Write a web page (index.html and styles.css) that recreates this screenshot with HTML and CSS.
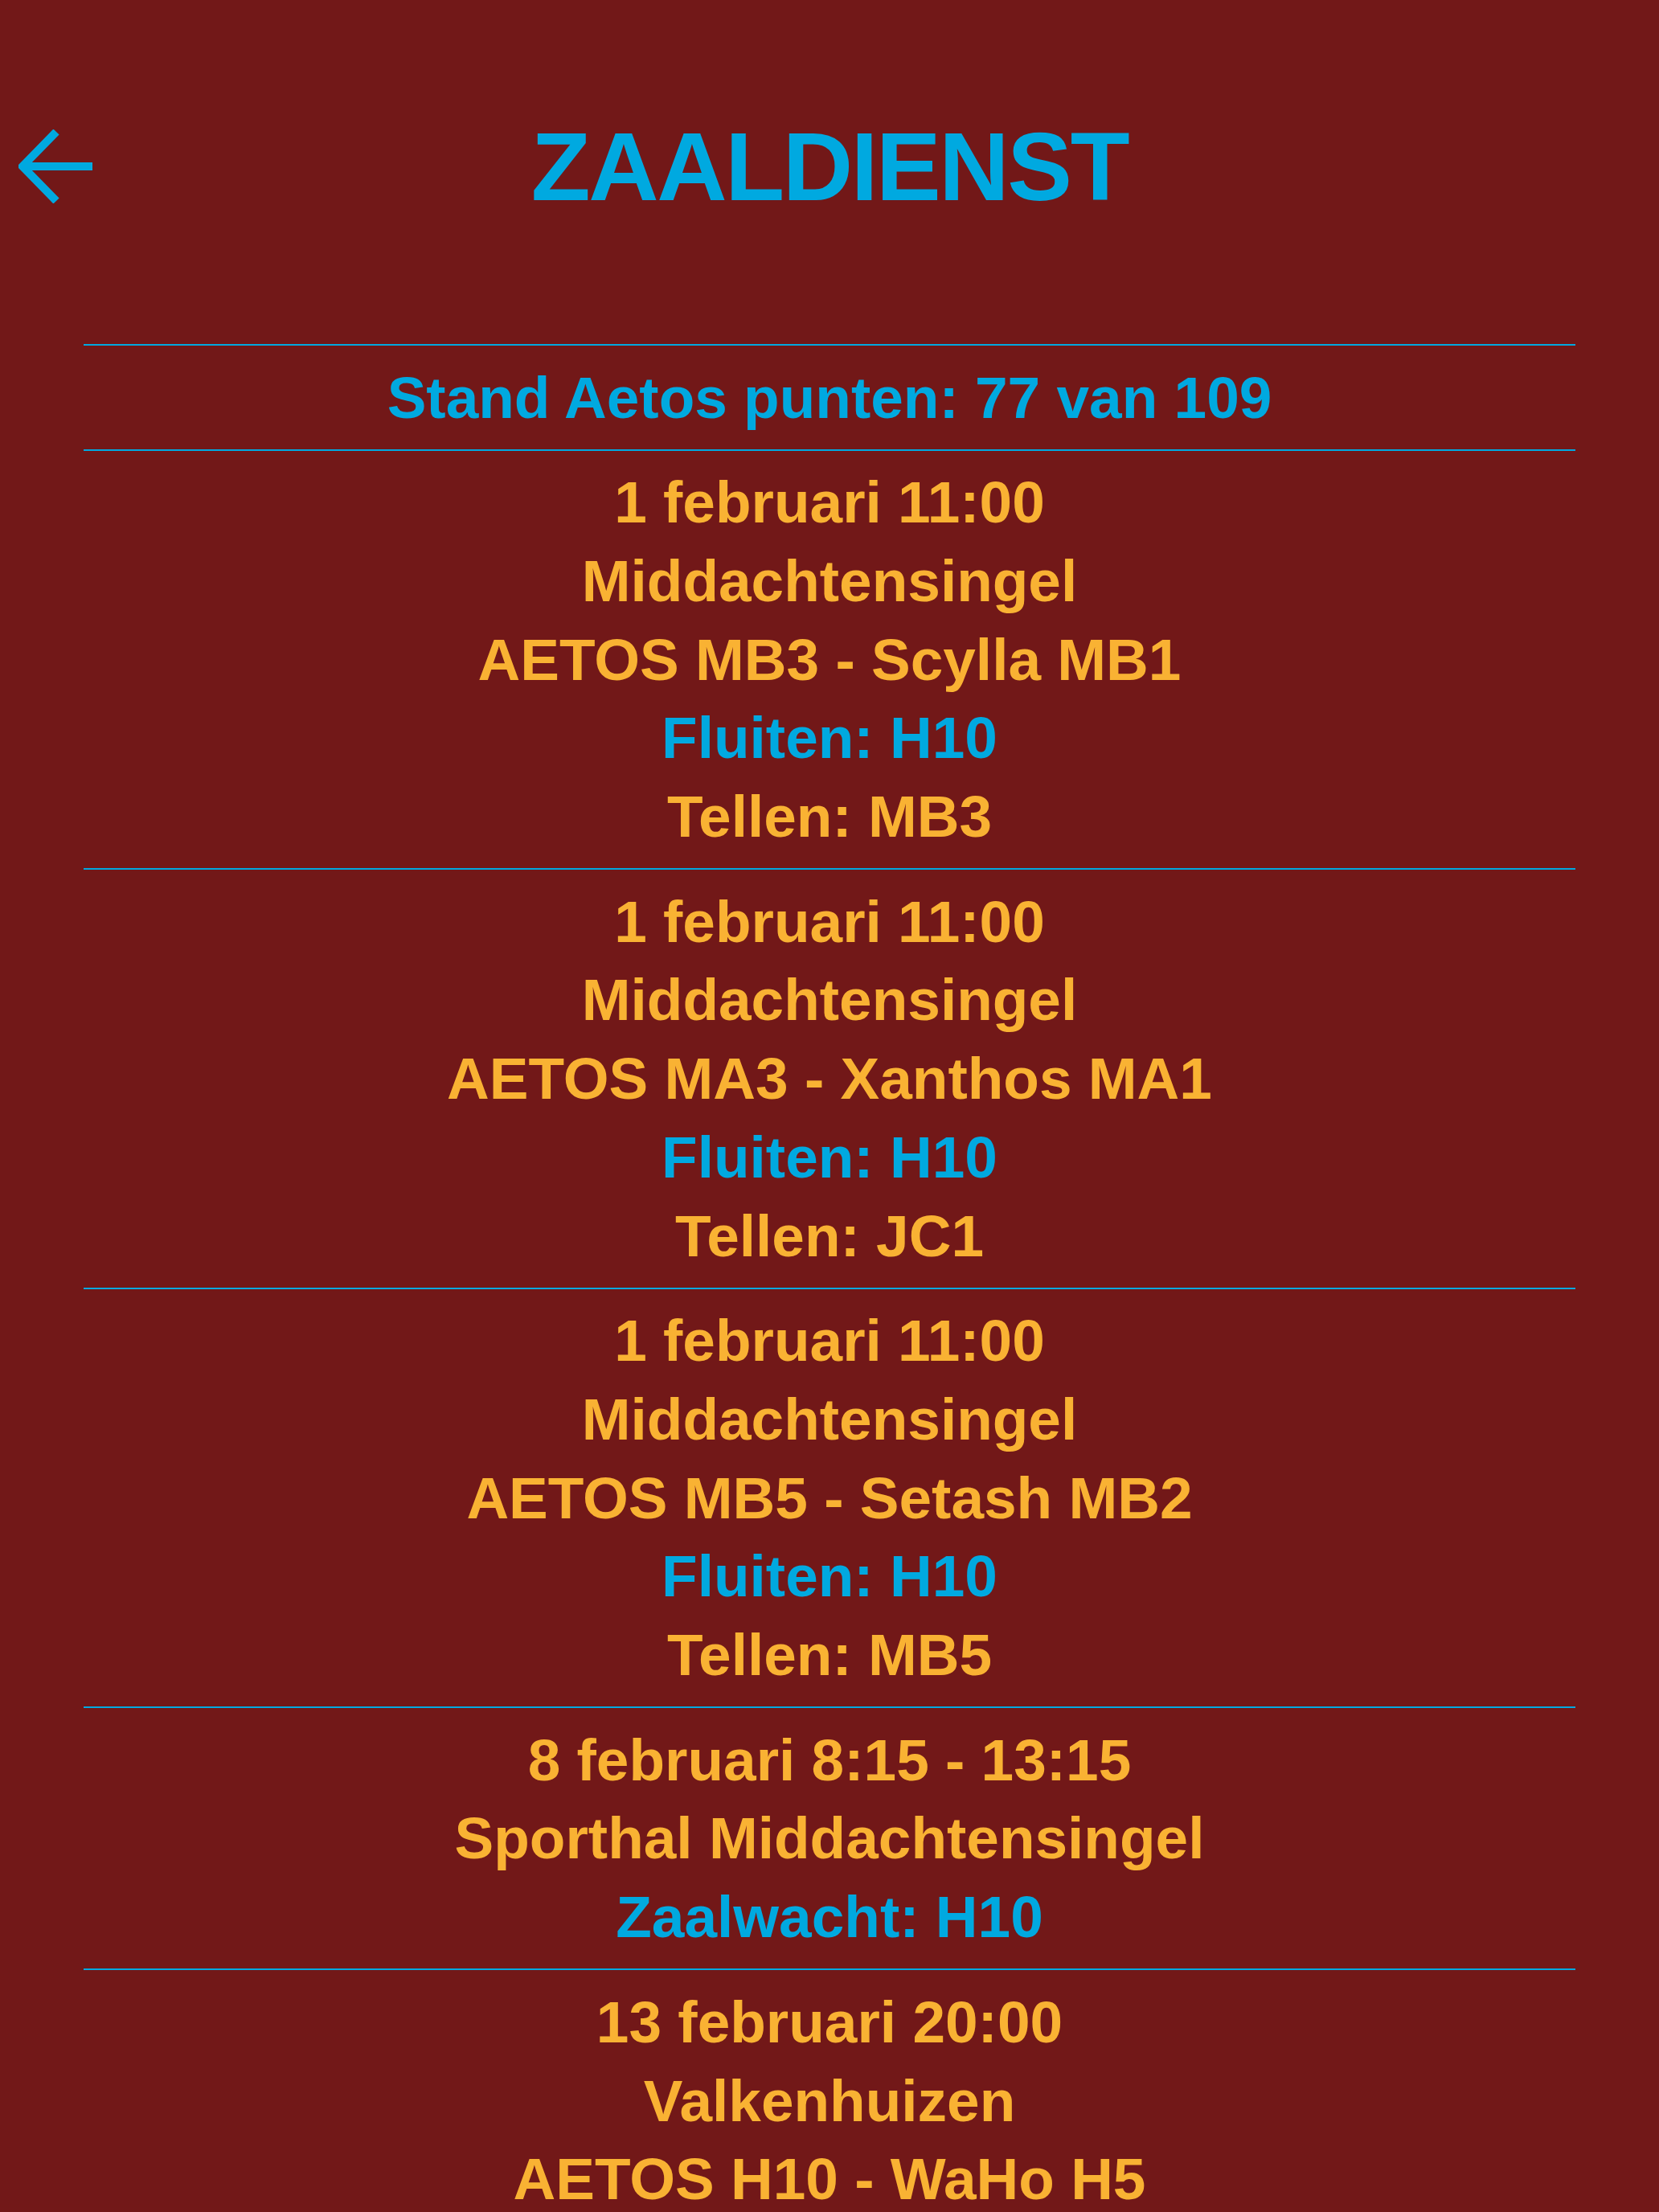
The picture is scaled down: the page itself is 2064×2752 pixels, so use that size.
FILE: index.html
```html
<!DOCTYPE html>
<html lang="nl">
<head>
<meta charset="utf-8">
<title>Zaaldienst</title>
<link rel="stylesheet" href="styles.css">
</head>
<body>
<div class="page">
  <header class="topbar">
    <div class="back">
      <svg class="back-icon" viewBox="0 0 92 92" width="92" height="92" aria-hidden="true">
        <path d="M47 3 L5 46 L47 89 M5 46 H92" fill="none" stroke="#00a9e0" stroke-width="10"/>
      </svg>
    </div>
    <h1 class="title">ZAALDIENST</h1>
    <div></div>
  </header>
  <main class="list">
    <div class="row"><div class="line blue">Stand Aetos punten: 77 van 109</div></div>
    <div class="row">
      <div class="line">1 februari 11:00</div>
      <div class="line">Middachtensingel</div>
      <div class="line">AETOS MB3 - Scylla MB1</div>
      <div class="line blue">Fluiten: H10</div>
      <div class="line">Tellen: MB3</div>
    </div>
    <div class="row">
      <div class="line">1 februari 11:00</div>
      <div class="line">Middachtensingel</div>
      <div class="line">AETOS MA3 - Xanthos MA1</div>
      <div class="line blue">Fluiten: H10</div>
      <div class="line">Tellen: JC1</div>
    </div>
    <div class="row">
      <div class="line">1 februari 11:00</div>
      <div class="line">Middachtensingel</div>
      <div class="line">AETOS MB5 - Setash MB2</div>
      <div class="line blue">Fluiten: H10</div>
      <div class="line">Tellen: MB5</div>
    </div>
    <div class="row">
      <div class="line">8 februari 8:15 - 13:15</div>
      <div class="line">Sporthal Middachtensingel</div>
      <div class="line blue">Zaalwacht: H10</div>
    </div>
    <div class="row">
      <div class="line">13 februari 20:00</div>
      <div class="line">Valkenhuizen</div>
      <div class="line">AETOS H10 - WaHo H5</div>
    </div>
  </main>
</div>
</body>
</html>
```
FILE: styles.css
```css
html, body {
  margin: 0;
  padding: 0;
  background: #721818;
}
body {
  font-family: "Liberation Sans", Arial, sans-serif;
  font-weight: 700;
  color: #f9b233;
}
.page {
  min-height: 2752px;
  overflow: hidden;
}
.topbar {
  display: grid;
  grid-template-columns: 1fr auto 1fr;
  align-items: center;
  padding-top: 137px;
  padding-bottom: 151px;
}
.back {
  padding-left: 23px;
  display: flex;
  align-items: center;
}
.back-icon {
  display: block;
}
.title {
  margin: 0;
  font-size: 121px;
  line-height: 140px;
  font-weight: 700;
  letter-spacing: -2.4px;
  color: #00a9e0;
  text-align: center;
}
.list {
  margin: 0 104px;
  border-top: 2px solid #00a9e0;
}
.row {
  border-bottom: 2px solid #00a9e0;
  padding: 15.5px 0;
  display: flex;
  flex-direction: column;
  align-items: center;
}
.line {
  font-size: 73px;
  line-height: 97.7px;
  text-align: center;
  white-space: nowrap;
}
.blue {
  color: #00a9e0;
}
```
